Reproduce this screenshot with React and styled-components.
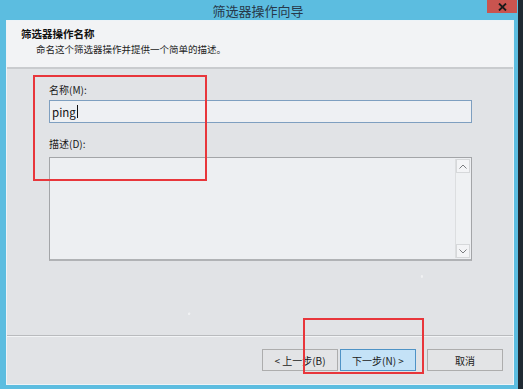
import React from 'react';
import styled, { createGlobalStyle } from 'styled-components';

const GlobalStyle = createGlobalStyle`
  html, body {
    margin: 0;
    padding: 0;
    background: #1e2830;
  }
  * {
    box-sizing: border-box;
  }
`;

const Screen = styled.div`
  position: relative;
  width: 523px;
  height: 389px;
  background: #1f2a33; /* dark strip on the right edge */
  padding-right: 5px;
  font-family: "Noto Sans CJK SC", "Liberation Sans", sans-serif;
  color: #1e1e1e;
`;

const Frame = styled.div`
  height: 100%;
  background: #5cbde0;
  padding: 0 4px 4px 6px;
  display: flex;
  flex-direction: column;
`;

const TitleBar = styled.div`
  position: relative;
  height: 20px;
  display: flex;
  align-items: center;
  justify-content: center;
  font-size: 13px;
  line-height: 1;
  color: #27394a;
  padding-right: 4px;
`;

const CloseButton = styled.div`
  position: absolute;
  top: 0;
  right: -3px;
  width: 30px;
  height: 13px;
  background: #c9544f;
  display: flex;
  align-items: center;
  justify-content: center;
`;

const Content = styled.div`
  flex: 1;
  display: flex;
  flex-direction: column;
  border: 1px solid #eef3f7;
  background: #e1e3e6;
`;

const Header = styled.div`
  height: 48px;
  background: #f2f3f5;
  border-bottom: 2px solid #c9cbce;
  padding: 7px 0 0 14px;
  display: flex;
  flex-direction: column;
  gap: 3px;
`;

const HeaderTitle = styled.div`
  font-size: 10.5px;
  font-weight: bold;
  line-height: 12px;
  color: #111;
`;

const HeaderSub = styled.div`
  font-size: 9.5px;
  line-height: 12px;
  padding-left: 15px;
  color: #222;
`;

const Main = styled.div`
  flex: 1;
  padding: 15px 41px 0 42px;
  display: flex;
  flex-direction: column;
  background:
    radial-gradient(circle at 12% 40%, rgba(255,255,255,0.5) 0 1px, transparent 1.5px),
    radial-gradient(circle at 64% 12%, rgba(255,255,255,0.5) 0 1px, transparent 1.5px),
    radial-gradient(circle at 82% 78%, rgba(255,255,255,0.5) 0 1px, transparent 1.5px),
    radial-gradient(circle at 36% 92%, rgba(255,255,255,0.5) 0 1px, transparent 1.5px),
    #e1e3e6;
`;

const Label = styled.div`
  font-size: 10px;
  line-height: 12px;
  color: #1a1a1a;
  margin-bottom: ${({ gap }) => gap}px;
`;

const TextBox = styled.div`
  height: 23px;
  border: 1px solid #7e9fc0;
  background: #eef0f3;
  display: flex;
  align-items: center;
  padding-left: 2px;
  font-size: 11.5px;
  color: #111;
  margin-bottom: 15px;
`;

const Caret = styled.span`
  display: inline-block;
  width: 1px;
  height: 13px;
  background: #111;
  margin-left: 1px;
`;

const Memo = styled.div`
  height: 104px;
  border: 1px solid #a3a5a8;
  border-bottom: 2px solid #b0b2b5;
  background: #edeff2;
  display: flex;
  justify-content: flex-end;
  padding: 1px;
`;

const ScrollBar = styled.div`
  width: 15px;
  display: flex;
  flex-direction: column;
  justify-content: space-between;
  border-left: 1px solid #dcdee0;
  background: #eff1f3;
`;

const ScrollArrow = styled.div`
  height: 14px;
  display: flex;
  align-items: center;
  justify-content: center;
  border: 1px solid #d6d8da;
  background: #f3f4f6;
`;

const Separator = styled.div`
  height: 2px;
  border-top: 1px solid #b9bbbe;
  border-bottom: 1px solid #f2f4f6;
`;

const Footer = styled.div`
  height: 47px;
  display: flex;
  align-items: center;
  justify-content: flex-end;
  padding: 0 10px 1px 0;
  gap: 2px;
`;

const Button = styled.div`
  width: ${({ w }) => w || 76}px;
  height: 22px;
  margin-left: ${({ space }) => space || 0}px;
  border: 1px solid ${({ primary }) => (primary ? '#4f93c6' : '#adadad')};
  background: ${({ primary }) => (primary ? '#c4e2f7' : '#e3e4e6')};
  display: flex;
  align-items: center;
  justify-content: center;
  font-size: 10px;
  color: #1a1a1a;
`;

const Highlight = styled.div`
  position: absolute;
  left: ${({ x }) => x}px;
  top: ${({ y }) => y}px;
  width: ${({ w }) => w}px;
  height: ${({ h }) => h}px;
  border: 2px solid #e8363b;
  pointer-events: none;
`;

const Chevron = ({ up }) => (
  <svg width="8" height="5" viewBox="0 0 8 5">
    <path
      d={up ? 'M0.5 4.5 L4 1 L7.5 4.5' : 'M0.5 0.5 L4 4 L7.5 0.5'}
      fill="none"
      stroke="#7a7c7f"
      strokeWidth="1"
    />
  </svg>
);

const CloseX = () => (
  <svg width="9" height="8" viewBox="0 0 9 8">
    <path d="M1 0.5 L8 7.5 M8 0.5 L1 7.5" stroke="#1a1a1a" strokeWidth="1.8" />
  </svg>
);

const App = () => {
  return (
    <>
      <GlobalStyle />
      <Screen>
        <Frame>
          <TitleBar>
            筛选器操作向导
            <CloseButton>
              <CloseX />
            </CloseButton>
          </TitleBar>
          <Content>
            <Header>
              <HeaderTitle>筛选器操作名称</HeaderTitle>
              <HeaderSub>命名这个筛选器操作并提供一个简单的描述。</HeaderSub>
            </Header>
            <Main>
              <Label gap={4}>名称(M):</Label>
              <TextBox>
                ping
                <Caret />
              </TextBox>
              <Label gap={7}>描述(D):</Label>
              <Memo>
                <ScrollBar>
                  <ScrollArrow>
                    <Chevron up />
                  </ScrollArrow>
                  <ScrollArrow>
                    <Chevron />
                  </ScrollArrow>
                </ScrollBar>
              </Memo>
            </Main>
            <Separator />
            <Footer>
              <Button>&lt; 上一步(B)</Button>
              <Button primary>下一步(N) &gt;</Button>
              <Button space={9}>取消</Button>
            </Footer>
          </Content>
        </Frame>
        <Highlight x={33} y={75} w={174} h={106} />
        <Highlight x={303} y={318} w={121} h={56} />
      </Screen>
    </>
  );
};

export default App;
